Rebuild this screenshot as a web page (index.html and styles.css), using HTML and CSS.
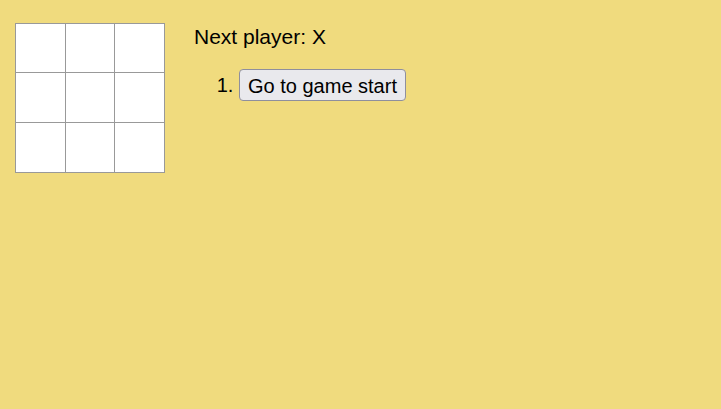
FILE: index.html
```html
<!DOCTYPE html>
<html>
<head>
<meta charset="utf-8">
<link rel="stylesheet" href="styles.css">
</head>
<body>
<div class="game">
  <div class="board">
    <div class="square"></div><div class="square"></div><div class="square"></div>
    <div class="square"></div><div class="square"></div><div class="square"></div>
    <div class="square"></div><div class="square"></div><div class="square"></div>
  </div>
  <div class="info">
    <div class="status">Next player: X</div>
    <ol class="moves">
      <li><button class="move">Go to game start</button></li>
    </ol>
  </div>
</div>
</body>
</html>
```
FILE: styles.css
```css
html, body {
  margin: 0;
  padding: 0;
  background: #f0db7e;
  height: 100%;
}
body {
  font-family: "Liberation Sans", Arial, sans-serif;
  font-size: 20px;
  color: #000;
}
.game {
  display: flex;
  align-items: flex-start;
  padding: 23px 15px;
}
.board {
  display: grid;
  grid-template-columns: 49px 48px 49px;
  grid-template-rows: 48px 49px 49px;
  gap: 1px;
  padding: 1px;
  background: #999;
}
.square {
  background: #fff;
}
.info {
  margin-left: 29px;
  padding-top: 2px;
}
.status {
  font-size: 21px;
  line-height: 23px;
}
.moves {
  margin: 21px 0 0;
  padding-left: 45px;
}
.moves li {
  line-height: 32px;
}
.move {
  font-family: "Liberation Sans", Arial, sans-serif;
  font-size: 20px;
  line-height: 23px;
  height: 32px;
  box-sizing: border-box;
  padding: 5px 8px 2px;
  background: #e9e9ed;
  border: 1px solid #8f8f9d;
  border-radius: 4px;
  color: #000;
  vertical-align: top;
}
```
